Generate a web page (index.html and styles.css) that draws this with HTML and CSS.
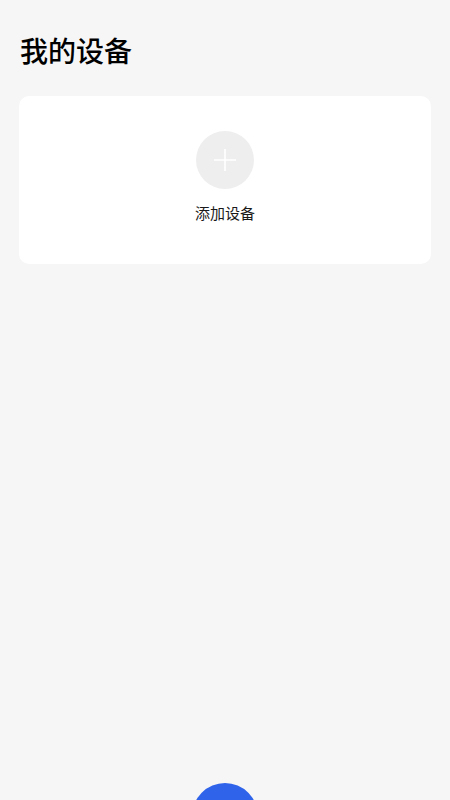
FILE: index.html
```html
<!DOCTYPE html>
<html lang="zh-CN">
<head>
    <meta charset="UTF-8">
    <title>我的设备</title>
    <link rel="stylesheet" href="styles.css">
</head>
<body>
<div class="page">
    <h1 class="title">我的设备</h1>
    <div class="card">
        <a class="add-btn" href="javascript:;">
            <span class="add-icon">
                <svg width="24" height="24" viewBox="0 0 24 24">
                    <path d="M12 1v22M1 12h22" stroke="#fff" stroke-width="1.6" fill="none"/>
                </svg>
            </span>
            <span class="add-text">添加设备</span>
        </a>
    </div>
</div>
<a class="fab" href="javascript:;"></a>
</body>
</html>
```

FILE: styles.css
```css
* {
    margin: 0;
    padding: 0;
    box-sizing: border-box;
}

html, body {
    height: 100%;
}

body {
    background: #f6f6f6;
    font-family: "Noto Sans CJK SC", "Noto Sans", sans-serif;
    color: #111;
    overflow: hidden;
}

a {
    color: inherit;
    text-decoration: none;
}

.page {
    padding: 0 19px;
}

.title {
    font-size: 28px;
    font-weight: 500;
    line-height: 40px;
    padding: 30px 1px 26px;
    color: #000;
}

.card {
    background: #fff;
    border-radius: 10px;
    height: 168px;
    display: flex;
    justify-content: center;
    padding-top: 35px;
}

.add-btn {
    display: flex;
    flex-direction: column;
    align-items: center;
}

.add-icon {
    width: 58px;
    height: 58px;
    border-radius: 50%;
    background: #eeeeee;
    display: flex;
    align-items: center;
    justify-content: center;
}

.add-text {
    margin-top: 13px;
    font-size: 15px;
    line-height: 22px;
    color: #1a1a1a;
}

.fab {
    position: fixed;
    left: 50%;
    bottom: -49px;
    width: 66px;
    height: 66px;
    margin-left: -33px;
    border-radius: 50%;
    background: #2f63ea;
}
```
